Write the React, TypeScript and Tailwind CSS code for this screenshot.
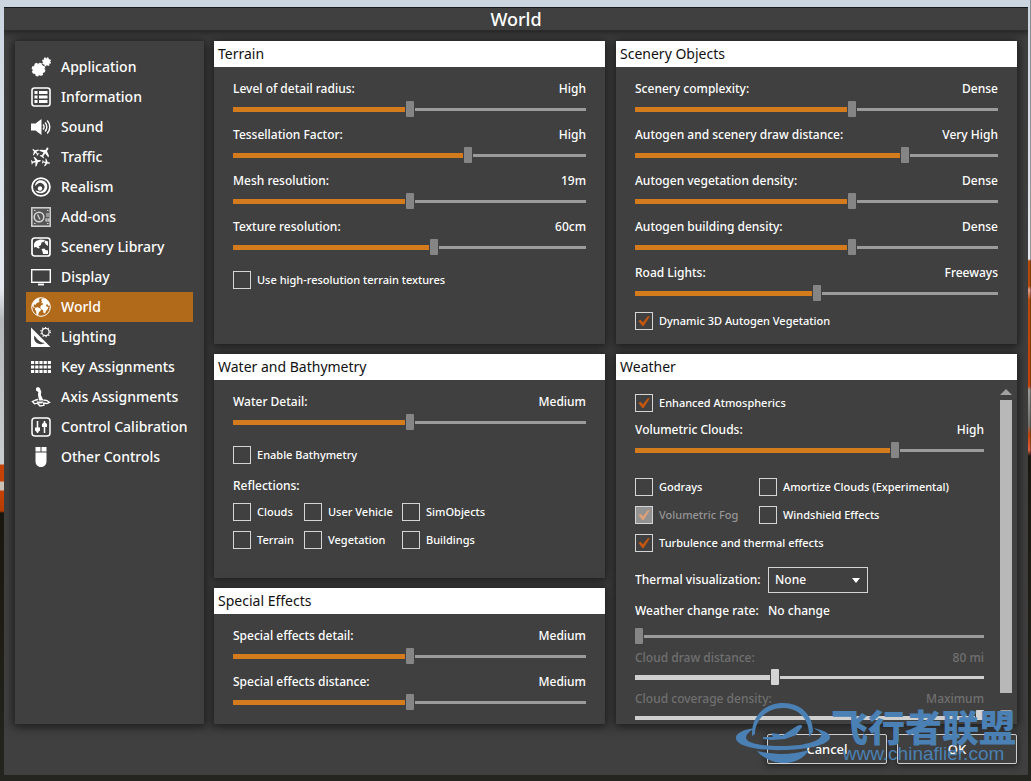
import { useId, useState, type ReactNode } from "react";

const SOLID = { fill: "currentColor", stroke: "none" };

const PLANE = "M0-5.5c.7 0 .9.8.9 1.6v1.6l4.4 2.8v1.3L.9.6.7 3.5l1.5 1.1v.9L0 5l-2.2.5v-.9l1.5-1.1L-.9.6l-4.4 1.2V.5l4.4-2.8v-1.6c0-.8.2-1.6.9-1.6z";

const icons: Record<string, ReactNode> = {
  Application: (
    <g fill="currentColor">
      <circle cx="7.500" cy="12.500" r="5.600" />
      <circle cx="7.500" cy="12.500" r="6" fill="none" strokeWidth="1.800" strokeDasharray="2.600 2.110" />
      <circle cx="15.500" cy="4.700" r="3.500" stroke="none" />
      <circle cx="15.500" cy="4.700" r="3.700" fill="none" strokeWidth="1.600" strokeDasharray="1.700 1.200" />
    </g>
  ),
  Information: (
    <>
      <rect x="1" y="1" width="18" height="18" rx="2.500" strokeWidth="1.600" />
      <path d="M3.500 5.500h3m1.500 0h8.500M3.500 10h3M8 10h8.500m-13 4.500h3m1.500 0h8.500" strokeWidth="2.800" />
    </>
  ),
  Sound: (
    <>
      <path d="M0 6.500h4.500L10.500 2v16l-6-4.500H0z" {...SOLID} />
      <path d="M12 7.500a3.500 3.500 0 0 1 0 5M14 5.500a6.500 6.500 0 0 1 0 9M16.200 3.500a9.500 9.500 0 0 1 0 13" strokeWidth="1.400" />
    </>
  ),
  Traffic: (
    <g {...SOLID}>
      <path d={PLANE} transform="translate(4.500 5) rotate(-45) scale(.72)" />
      <path d={PLANE} transform="translate(13.800 5.500) rotate(35) scale(1.050)" />
      <path d={PLANE} transform="translate(5 14.500) rotate(80) scale(.9)" />
      <path d={PLANE} transform="translate(15 15.500) rotate(100) scale(.72)" />
    </g>
  ),
  Realism: (
    <>
      <circle cx="10" cy="10" r="8.900" strokeWidth="1.800" />
      <path d="M9.500 3.200c4 0 6.800 2.600 6.800 6.300 0 4-2.800 6.800-6.800 6.800-2.600 0-4.300-1.300-5.300-3 1 .6 1.900.8 2.800.7A4.300 4.300 0 1 0 5.800 7.500L4 9c.2-3.200 2.300-5.800 5.500-5.800z" {...SOLID} />
      <circle cx="9" cy="11.500" r="2.200" {...SOLID} />
    </>
  ),
  "Add-ons": (
    <g stroke="#d6d6d6">
      <rect x=".8" y=".8" width="18.400" height="18.400" strokeWidth="1.500" fill="#555" />
      <circle cx="8" cy="10" r="4.800" strokeWidth="1.500" />
      <path d="m6.500 7.500 2.500 5M3 3.500h1.500M16 3.500h1.500M3 16.500h1.500M16 16.500h1.500M15 7h3M15 9h3M15 12h3v2h-3z" strokeWidth="1.200" />
    </g>
  ),
  "Scenery Library": (
    <>
      <rect x="1" y="1" width="18" height="18" rx="2.500" strokeWidth="1.700" />
      <path d="M3 6.500 5 4l4-1.500 5 .5L12.500 5l-2 .5L10 8 7.500 9.500 9 11l-1.500.5L5 10l-2 .5z" {...SOLID} />
      <path d="m14 3.500 3 1V9l-2-1.500-1.500-2zM10.500 12l3-.5 1 1.500 2.500.5v3.500h-5l-.5-2.500z" {...SOLID} />
    </>
  ),
  Display: (
    <>
      <rect x=".7" y="2.700" width="18.600" height="12.600" strokeWidth="1.400" />
      <path d="M7 17.500h6" strokeWidth="1.800" />
    </>
  ),
  World: (
    <>
      <circle cx="10" cy="10" r="9.300" strokeWidth="1" />
      <g {...SOLID}>
        <path d="M1.500 6.500 4 3l3.500-2 1.500.8-1.500 1.400 1.300.8-1.300 1.500-1.800.5-1 1.700L3 7.500l-.5 1.800L4 10.500l-1 .5-2-2z" />
        <path d="m4.500 10.500 2.500-.3L10 12l-.5 2-1.500 1-1 3.500-1.500-1L5 14l-1.200-1.800z" />
        <path d="m11 1.500 3.500.3 3 2.700 1.500 3.500-1.500 1-1-1.800-1.500.5.5 1.800 2 .5-1 2.500-1.500 1.500-1 2.500-1.500-.5-.5-3-2-.8-.8-2.200 1-1.800 1.800-.7-.2-1.500-1.800.2 1-1.700-.8-1.200z" />
      </g>
    </>
  ),
  Lighting: (
    <>
      <path d="M0 .5 19.500 20H0zM3.500 8.500c-1.300 3 .2 7 4.200 8.300 2.300.7 4.700.2 6-.8-3.700-.2-7.700-3-10.200-7.500z" fillRule="evenodd" {...SOLID} />
      <circle cx="14.500" cy="5" r="3.600" strokeWidth="1.200" />
      <circle cx="14.500" cy="5" r="4.700" strokeWidth="1.200" strokeDasharray="1.200 1.800" />
    </>
  ),
  "Key Assignments": (
    <path d="M0 5.500h20M0 10h20M0 14.500h20" strokeWidth="3" strokeDasharray="3.200 1" />
  ),
  "Axis Assignments": (
    <>
      <path d="M5 1.500C5.500-.2 8.300-.2 9 1.500l1.300 3.200-.4 3.300 2.600 5.500H8L7 8l.3-3L5 3.500z" {...SOLID} />
      <path d="M7 12.500c-3.500.5-3.700 1.500-5.500 2l2 2.200 3-.5 2.500 2.800 4-.7-.5-2.300 3.500.5 2.500-1.200-2.500-1.600-3.500-.7" strokeWidth="1.300" />
      <path d="M5.500 14.500h7l-1.500 2H7z" {...SOLID} />
    </>
  ),
  "Control Calibration": (
    <>
      <rect x="1" y="1" width="18" height="18" rx="3" strokeWidth="1.500" />
      <path d="M6.500 4v12M13.500 4v12" strokeWidth="1.500" />
      <path d="M4 10.500h5v3l-2.500 2-2.500-2zM11 7l2.500-2L16 7v3h-5z" {...SOLID} />
    </>
  ),
  "Other Controls": (
    <path d="M4.500 0h5v4.500h-5zM10.500 0h5v4.500h-5zM4.500 5.500h11V14c0 3.500-2 6-5.500 6s-5.500-2.500-5.500-6z" {...SOLID} />
  ),
};

function NavItem({ name, active }: { name: string; active?: boolean }) {
  return (
    <a
      href="#"
      aria-current={active ? "page" : undefined}
      className={`flex h-[30px] items-center gap-2.5 pl-[5px] text-sm whitespace-nowrap ${active ? "bg-[#b1691a]" : ""}`}
    >
      <svg viewBox="0 0 20 20" className="size-5 shrink-0" fill="none" stroke="currentColor" aria-hidden="true">
        {icons[name]}
      </svg>
      {name}
    </a>
  );
}

function Panel({ title, children }: { title: string; children: ReactNode }) {
  return (
    <section className="flex flex-col bg-[#404040] shadow-[0_1px_9px_2px_#1c1c1c]">
      <h2 className="h-[26px] bg-white px-1 text-sm leading-[26px] font-normal text-[#111]">{title}</h2>
      {children}
    </section>
  );
}

type RangeProps = { id?: string; label?: string; initial: number; disabled?: boolean };

function Range({ id, label, initial, disabled }: RangeProps) {
  const [value, setValue] = useState(initial);
  return (
    <input
      id={id}
      aria-label={label}
      type="range"
      value={value}
      disabled={disabled}
      onChange={(e) => setValue(Number(e.target.value))}
      style={{ backgroundSize: `${value}% 5px, 100% 3px` }}
      className="block h-4 w-full appearance-none bg-[linear-gradient(#d47b1e,#d47b1e),linear-gradient(#9b9b9b,#9b9b9b)] bg-[position:left_center] bg-no-repeat disabled:bg-[linear-gradient(#cfcfcf,#cfcfcf),linear-gradient(#cfcfcf,#cfcfcf)] [&::-webkit-slider-thumb]:h-4 [&::-webkit-slider-thumb]:w-2 [&::-webkit-slider-thumb]:appearance-none [&::-webkit-slider-thumb]:rounded-[1px] [&::-webkit-slider-thumb]:bg-[#858585] [&::-webkit-slider-thumb]:shadow-[0_0_0_1px_#404040] disabled:[&::-webkit-slider-thumb]:bg-[#d4d4d4]"
    />
  );
}

function Setting({ label, value, at, disabled }: { label: string; value: string; at: number; disabled?: boolean }) {
  const id = useId();
  return (
    <div className={`flex flex-col ${disabled ? "gap-px text-[#707070]" : "gap-0.5"}`}>
      <div className="flex justify-between text-xs leading-5">
        <label htmlFor={id}>{label}</label>
        <output htmlFor={id}>{value}</output>
      </div>
      <Range id={id} initial={at} disabled={disabled} />
    </div>
  );
}

function Check({ label, checked = false, disabled }: { label: string; checked?: boolean; disabled?: boolean }) {
  return (
    <label className={`flex h-[18px] items-center gap-1.5 text-[11px] whitespace-nowrap ${disabled ? "text-[#969696]" : ""}`}>
      <span className="relative size-[18px] shrink-0">
        <input
          type="checkbox"
          defaultChecked={checked}
          disabled={disabled}
          className="peer block size-[18px] appearance-none border border-[#d5d5d5] disabled:bg-[#929292]"
        />
        <svg
          viewBox="0 0 18 18"
          className="pointer-events-none absolute inset-0 hidden text-[#c4560f] peer-checked:block peer-disabled:text-[#dba078]"
          fill="currentColor"
          aria-hidden="true"
        >
          <path d="m3.500 9 2-1.300L8 10.300 12.500 4.500 15 4 8.700 14H7.300z" />
        </svg>
      </span>
      {label}
    </label>
  );
}

function Watermark() {
  return (
    <div className="pointer-events-none absolute right-3 bottom-[11px] flex items-end text-[#4a80b4]">
      <svg viewBox="0 0 96 62" className="h-[62px] w-24" fill="currentColor" aria-hidden="true">
        <path d="M17 34C16 14 30 1 48 1s30 12 30 29l-4 5C75 17 64 7 50 6 34 5 20 16 20 32z" />
        <path d="M20 26C8 28 0 31 1 37c2 8 25 12 50 11 26-1 44-6 44-13 0-4-7-7-17-9 5 2 9 5 8 8-2 6-19 10-38 10S12 42 11 36c0-4 4-7 9-10z" />
        <path d="M22 49c16 4 35 4 52-1-5 8-14 13-24 13-12 0-22-5-28-12z" />
        <path d="M28 35h17l17-11c3-2 6-1 5 1l-6 8-11 4-13 1-9-1zM36 31l8 1 4 3H38z" />
      </svg>
      <div className="flex flex-col items-center">
        <span className="font-['Noto_Sans_CJK_SC',sans-serif] text-[37px] leading-[36px] font-black">飞行者联盟</span>
        <span className="font-['Liberation_Sans',sans-serif] text-[19px] leading-5">www.chinaflier.com</span>
      </div>
    </div>
  );
}

const BUTTON = "h-[30px] w-[120px] rounded-[2px] border border-[#cfcfcf] pt-0.5 text-[13px] shadow-[0_1px_6px_1px_#222]";

// slivers of the cockpit view on either side of the dialog
const BACKDROP =
  "bg-[linear-gradient(#cbd5e0,#e4e8ee_290px,#b5b8ba_320px,#c9cdd0_464px,#c64206_465px,#c64206_481px,#c9c0b8_482px,#c9c0b8_490px,#c64206_491px,#b63c05_511px,#17170f_513px,#25251f),linear-gradient(#cbd5e0,#e4e8ee_259px,#b84a08_261px,#b84a08_286px,#e0a090_290px,#b84a08_300px,#c64206_386px,#9a9a98_390px,#70706c_425px,#c64206_435px,#e06040_450px,#17170f_456px,#25251f)]";

export default function App() {
  return (
    <main
      className={`min-h-screen bg-[#25251f] bg-[size:60%_100%,60%_100%] bg-[position:left,right] bg-no-repeat pt-[7px] pr-[3px] pb-1.5 pl-1 font-['Noto_Sans','Open_Sans',sans-serif] font-medium text-white ${BACKDROP}`}
    >
      <div className="relative overflow-hidden bg-[#404040]">
        <h1 className="h-6 border-t border-b border-t-[#15181b] border-b-[#2b2b2b] text-center text-lg leading-[22px] font-medium shadow-[0_1px_6px_1px_#222]">
          World
        </h1>

        <div className="flex gap-2.5 px-[11px] pt-2.5">
          <nav className="w-[189px] shrink-0 bg-[#404040] p-[11px] shadow-[0_1px_9px_2px_#1c1c1c]">
            {Object.keys(icons).map((name) => (
              <NavItem key={name} name={name} active={name === "World"} />
            ))}
          </nav>

          <div className="grid grow grid-cols-[391fr_401fr] gap-x-[11px] gap-y-2.5">
            <Panel title="Terrain">
              <div className="px-[19px] pt-3">
                <div className="flex flex-col gap-2">
                  <Setting label="Level of detail radius:" value="High" at={50} />
                  <Setting label="Tessellation Factor:" value="High" at={67} />
                  <Setting label="Mesh resolution:" value="19m" at={50} />
                  <Setting label="Texture resolution:" value="60cm" at={57} />
                </div>
                <div className="mt-4">
                  <Check label="Use high-resolution terrain textures" />
                </div>
              </div>
            </Panel>

            <Panel title="Scenery Objects">
              <div className="flex flex-col gap-2 px-[19px] pt-3">
                <Setting label="Scenery complexity:" value="Dense" at={60} />
                <Setting label="Autogen and scenery draw distance:" value="Very High" at={75} />
                <Setting label="Autogen vegetation density:" value="Dense" at={60} />
                <Setting label="Autogen building density:" value="Dense" at={60} />
                <Setting label="Road Lights:" value="Freeways" at={50} />
              </div>
              <div className="px-[19px] pt-[11px] pb-[14px]">
                <Check label="Dynamic 3D Autogen Vegetation" checked />
              </div>
            </Panel>

            <div className="flex flex-col gap-2.5">
              <Panel title="Water and Bathymetry">
                <div className="px-[19px] pt-3 pb-[29px]">
                  <Setting label="Water Detail:" value="Medium" at={50} />
                  <div className="mt-4">
                    <Check label="Enable Bathymetry" />
                  </div>
                  <fieldset className="mt-3">
                    <legend className="text-xs leading-5">Reflections:</legend>
                    <div className="grid grid-cols-[71px_98px_1fr] gap-y-2.5 pt-[7px]">
                      <Check label="Clouds" />
                      <Check label="User Vehicle" />
                      <Check label="SimObjects" />
                      <Check label="Terrain" />
                      <Check label="Vegetation" />
                      <Check label="Buildings" />
                    </div>
                  </fieldset>
                </div>
              </Panel>

              <Panel title="Special Effects">
                <div className="flex flex-col gap-2 px-[19px] pt-3 pb-[14px]">
                  <Setting label="Special effects detail:" value="Medium" at={50} />
                  <Setting label="Special effects distance:" value="Medium" at={50} />
                </div>
              </Panel>
            </div>

            <Panel title="Weather">
              {/* takes whatever height the row leaves and clips the rest */}
              <div className="flex h-0 grow gap-4 pr-[5px] pb-1 pl-[19px]">
                <div className="grow overflow-hidden pt-[14px]">
                  <Check label="Enhanced Atmospherics" checked />
                  <div className="pt-2">
                    <Setting label="Volumetric Clouds:" value="High" at={75} />
                  </div>
                  <div className="grid grid-cols-[124px_1fr] gap-y-2.5 pt-5">
                    <Check label="Godrays" />
                    <Check label="Amortize Clouds (Experimental)" />
                    <Check label="Volumetric Fog" checked disabled />
                    <Check label="Windshield Effects" />
                    <Check label="Turbulence and thermal effects" checked />
                  </div>
                  <div className="grid grid-cols-[133px_1fr] items-center gap-y-2 pt-[15px] pb-[7px] text-xs leading-5 whitespace-nowrap">
                    <label htmlFor="thermal">Thermal visualization:</label>
                    <div className="relative w-[100px]">
                      <select id="thermal" className="block h-[26px] w-full appearance-none border border-[#d5d5d5] bg-[#404040] pl-1.5 text-xs">
                        <option>None</option>
                      </select>
                      <svg viewBox="0 0 8 5" className="pointer-events-none absolute top-[11px] right-2 h-[5px] w-2" fill="currentColor" aria-hidden="true">
                        <path d="M0 0h8L4 5z" />
                      </svg>
                    </div>
                    <span>Weather change rate:</span>
                    <span>No change</span>
                  </div>
                  <Range label="Weather change rate" initial={0} />
                  <div className="flex flex-col gap-1 pt-1">
                    <Setting label="Cloud draw distance:" value="80 mi" at={40} disabled />
                    <Setting label="Cloud coverage density:" value="Maximum" at={100} disabled />
                  </div>
                </div>
                <div className="flex w-3 shrink-0 flex-col pt-[9px] pb-1 text-[#a0a0a0]">
                  <svg viewBox="0 0 12 6" className="h-1.5 w-3" fill="currentColor" aria-hidden="true">
                    <path d="M0 6h12L6 0z" />
                  </svg>
                  <div className="mt-[5px] mb-[17px] grow bg-[#b8b8b8]" />
                  <svg viewBox="0 0 12 6" className="h-1.5 w-3" fill="currentColor" aria-hidden="true">
                    <path d="M0 0h12L6 6z" />
                  </svg>
                </div>
              </div>
            </Panel>
          </div>
        </div>

        <div className="flex justify-end gap-2.5 px-[11px] pt-2.5 pb-[11px]">
          <button type="button" className={BUTTON}>Cancel</button>
          <button type="button" className={BUTTON}>OK</button>
        </div>
        <Watermark />
      </div>
    </main>
  );
}
